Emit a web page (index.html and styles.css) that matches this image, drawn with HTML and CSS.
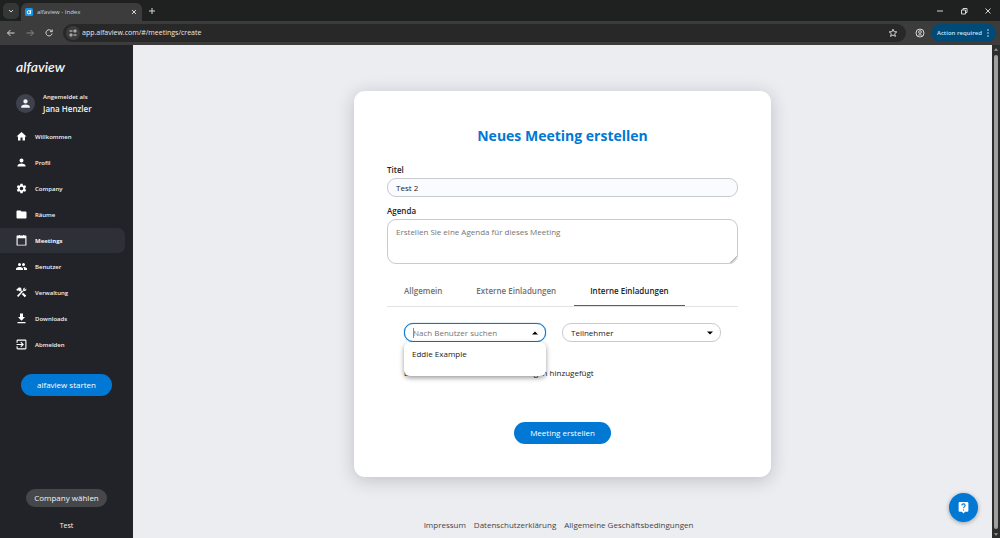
FILE: index.html
```html
<!DOCTYPE html>
<html lang="de">
<head>
    <meta charset="UTF-8">
    <meta name="viewport" content="width=device-width, initial-scale=1.0">
    <title>alfaview - Index</title>
    <link rel="stylesheet" href="styles.css">
</head>
<body>
    <!-- Browser window -->
    <div class="tab-strip">
        <button class="tab-search" aria-label="Search tabs">
            <svg class="icon-s" viewBox="0 0 8 8"><path class="line" d="M2 3l2 2 2-2"/></svg>
        </button>
        <div class="browser-tab">
            <svg class="favicon" viewBox="0 0 16 16"><rect width="16" height="16" rx="3" fill="#1694e8"/><ellipse cx="7.5" cy="8.5" rx="3" ry="3.4" fill="none" stroke="#fff" stroke-width="2"/><path d="M11.5 4l-1 8" stroke="#fff" stroke-width="2"/></svg>
            <span class="tab-title">alfaview - Index</span>
            <button class="plain" aria-label="Close tab">
                <svg class="icon-s" viewBox="0 0 8 8"><path class="line" d="M2 2l4 4M6 2l-4 4"/></svg>
            </button>
        </div>
        <button class="plain" aria-label="New tab">
            <svg class="icon-s" viewBox="0 0 8 8"><path class="line" d="M4 1v6M1 4h6"/></svg>
        </button>
        <div class="window-buttons">
            <button class="plain" aria-label="Minimize"><svg class="icon-s" viewBox="0 0 8 8"><path class="line" d="M1 4h6"/></svg></button>
            <button class="plain" aria-label="Restore"><svg class="icon-s" viewBox="0 0 8 8"><path class="line" d="M1.5 3h4v4h-4zM3 3V1.500h4v4H5.500"/></svg></button>
            <button class="plain" aria-label="Close"><svg class="icon-s" viewBox="0 0 8 8"><path class="line" d="M1.500 1.500l5 5M6.500 1.500l-5 5"/></svg></button>
        </div>
    </div>
    <div class="toolbar">
        <button class="plain" aria-label="Back"><svg class="icon-m" viewBox="0 0 10 10"><path class="line" d="M8.500 5h-7M4.500 2l-3 3 3 3"/></svg></button>
        <button class="plain dim" aria-label="Forward"><svg class="icon-m" viewBox="0 0 10 10"><path class="line" d="M1.500 5h7M5.500 2l3 3-3 3"/></svg></button>
        <button class="plain" aria-label="Reload"><svg class="icon-m" viewBox="0 0 10 10"><path class="line" d="M7.800 3.400A3.100 3.100 0 1 0 8.100 5.500M8.200 1.500v2.200H6"/></svg></button>
        <div class="address-bar">
            <button class="site-info" aria-label="Site information"><svg class="icon-m" viewBox="0 0 10 10"><path class="line" d="M1.500 3h3M5.500 7h3"/><circle class="line" cx="7" cy="3" r="1.100"/><circle class="line" cx="3" cy="7" r="1.100"/></svg></button>
            <input class="url" type="text" aria-label="Address" value="app.alfaview.com/#/meetings/create">
            <button class="plain" aria-label="Bookmark"><svg class="icon-m" viewBox="0 0 10 10"><path class="line" d="M5 1.200l1.100 2.500 2.700.2-2.100 1.800.7 2.700L5 7l-2.400 1.400.7-2.700-2.100-1.800 2.700-.2z"/></svg></button>
        </div>
        <button class="plain profile-button" aria-label="Profile"><svg class="icon-m" viewBox="0 0 10 10"><circle class="line" cx="5" cy="5" r="4"/><circle class="line" cx="5" cy="4" r="1.400"/><path class="line" d="M2.500 8c1-1.700 4-1.700 5 0"/></svg></button>
        <button class="action-required">Action required
            <svg class="icon-s" viewBox="0 0 8 8" fill="currentColor"><circle cx="4" cy="1" r=".8"/><circle cx="4" cy="4" r=".8"/><circle cx="4" cy="7" r=".8"/></svg>
        </button>
    </div>

    <div class="app">
        <aside class="sidebar">
            <div class="logo">alfaview</div>
            <div class="user">
                <div class="avatar">
                    <svg viewBox="0 0 24 24" fill="currentColor"><path d="M12 12a4 4 0 1 0 0-8 4 4 0 0 0 0 8zm0 2c-2.670 0-8 1.340-8 4v2h16v-2c0-2.660-5.330-4-8-4z"/></svg>
                </div>
                <div>
                    <p class="user-label">Angemeldet als</p>
                    <p class="user-name">Jana Henzler</p>
                </div>
            </div>

            <nav class="menu">
                <a href="#"><svg viewBox="1 1 22 22"><path d="M10 20v-6h4v6h5v-8h3L12 3 2 12h3v8z"/></svg>Willkommen</a>
                <a href="#"><svg viewBox="1 1 22 22"><path d="M12 12a4 4 0 1 0 0-8 4 4 0 0 0 0 8zm0 2c-2.670 0-8 1.340-8 4v2h16v-2c0-2.660-5.330-4-8-4z"/></svg>Profil</a>
                <a href="#"><svg viewBox="1 1 22 22"><path d="M19.140 12.940c.04-.3.060-.61.060-.94s-.02-.64-.07-.94l2.030-1.580c.18-.14.230-.41.120-.61l-1.920-3.320c-.12-.22-.37-.29-.59-.22l-2.390.96c-.5-.38-1.030-.7-1.620-.94l-.36-2.540A.484.484 0 0 0 13.920 2.400h-3.840c-.24 0-.43.17-.47.410l-.36 2.540c-.59.240-1.130.570-1.620.940l-2.390-.96c-.22-.08-.47 0-.59.220L2.740 8.870c-.12.210-.08.470.12.610l2.030 1.580c-.05.300-.09.630-.09.940s.02.640.07.940l-2.030 1.580c-.18.140-.23.410-.12.610l1.920 3.320c.12.220.37.290.59.220l2.390-.96c.5.380 1.030.7 1.620.94l.36 2.540c.05.240.24.410.48.410h3.840c.24 0 .44-.17.47-.41l.36-2.540c.59-.24 1.130-.56 1.620-.94l2.390.96c.22.080.47 0 .59-.22l1.920-3.320c.12-.22.070-.47-.12-.61zM12 15.600a3.600 3.600 0 1 1 0-7.200 3.600 3.600 0 0 1 0 7.200z"/></svg>Company</a>
                <a href="#"><svg viewBox="1 1 22 22"><path d="M10 4H4c-1.100 0-2 .9-2 2v12c0 1.100.9 2 2 2h16c1.100 0 2-.9 2-2V8c0-1.100-.9-2-2-2h-8z"/></svg>Räume</a>
                <a href="#" class="active"><svg viewBox="2 2 20 20"><path d="M20 3h-3V1h-2v2H9V1H7v2H4Q3 3 3 4v17h18V4q0-1-1-1zm-1 16.500H5V8h14z" fill-rule="evenodd"/></svg>Meetings</a>
                <a href="#"><svg viewBox="1 1 22 22"><path d="M16 11a3 3 0 1 0 0-6 3 3 0 0 0 0 6zm-8 0a3 3 0 1 0 0-6 3 3 0 0 0 0 6zm0 2c-2.330 0-7 1.170-7 3.500V19h14v-2.500C15 14.170 10.330 13 8 13zm8 0c-.29 0-.62.020-.97.050 1.160.84 1.970 1.970 1.970 3.450V19h6v-2.500c0-2.330-4.670-3.500-7-3.500z"/></svg>Benutzer</a>
                <a href="#"><svg viewBox="1 1 22 22"><path d="M3 18.500l8-8-2-2-1.500 1.500-1.500-1.500V6L4 9 1.500 6.500 6.500 2H10l2.500 3.500L11 7l2 2L15.500 7.500C14 4 17 1.500 20 2.500L17.500 5 19 6.500 21.500 4c1 3-1.500 6-5 4.500L5.500 21zM15.500 12.500l6 6-3 3-6-6z"/></svg>Verwaltung</a>
                <a href="#"><svg viewBox="1 1 22 22"><path d="M19 9h-4V2H9v7H5l7 7.500zM4 19v2.500h16V19z"/></svg>Downloads</a>
                <a href="#"><svg viewBox="2 2 20 20"><path d="M10 15.600l1.400 1.400 5-5-5-5L10 8.400l2.600 2.600H3v2h9.600zM19 3H5a2 2 0 0 0-2 2v4h2V5h14v14H5v-4H3v4c0 1.100.9 2 2 2h14c1.100 0 2-.9 2-2V5c0-1.100-.9-2-2-2z"/></svg>Abmelden</a>
            </nav>

            <button class="btn start-button">alfaview starten</button>
            <div class="company">
                <button class="company-button">Company wählen</button>
                <p>Test</p>
            </div>
        </aside>

        <main class="content">
            <form class="card">
                <h1>Neues Meeting erstellen</h1>

                <label for="title">Titel</label>
                <input class="field" type="text" id="title" name="title" value="Test 2">

                <label for="agenda">Agenda</label>
                <textarea class="field agenda" id="agenda" name="agenda" placeholder="Erstellen Sie eine Agenda für dieses Meeting"></textarea>

                <div class="tabs" role="tablist">
                    <button type="button" role="tab">Allgemein</button>
                    <button type="button" role="tab">Externe Einladungen</button>
                    <button type="button" role="tab" class="selected" aria-selected="true">Interne Einladungen</button>
                </div>

                <div class="tab-panel">
                    <div class="invite-row">
                        <div class="combo search">
                            <input class="field" type="text" id="user" aria-label="Benutzer" placeholder="Nach Benutzer suchen">
                            <svg class="arrow" viewBox="0 0 6 4"><path d="M0 3.500L3 .5l3 3z"/></svg>
                            <ul class="options">
                                <li>Eddie Example</li>
                            </ul>
                        </div>
                        <div class="combo role">
                            <select class="field" id="role" aria-label="Rolle">
                                <option>Teilnehmer</option>
                            </select>
                            <svg class="arrow" viewBox="0 0 6 4"><path d="M0 .5l3 3 3-3z"/></svg>
                        </div>
                    </div>
                    <p class="empty">Es wurden keine internen Einladungen hinzugefügt</p>
                </div>

                <button type="submit" class="btn submit-button">Meeting erstellen</button>
            </form>

            <footer>
                <a href="#">Impressum</a>
                <a href="#">Datenschutzerklärung</a>
                <a href="#">Allgemeine Geschäftsbedingungen</a>
            </footer>

            <button class="help-button" aria-label="Hilfe">
                <svg viewBox="0 0 24 24"><path fill="#fff" d="M5 2h14a2 2 0 0 1 2 2v14a2 2 0 0 1-2 2h-4l-3 3-3-3H5a2 2 0 0 1-2-2V4c0-1.100.9-2 2-2z"/><path fill="none" stroke="#0078d4" stroke-width="2" d="M9 8.500C9 4 15 4.500 15 8.300c0 2.500-3 2.700-3 5.200M12 15.500v2"/></svg>
            </button>
        </main>

        <div class="scrollbar">
            <svg viewBox="0 0 6 4"><path d="M0 4L3 0l3 4z"/></svg>
            <div class="thumb"></div>
            <svg viewBox="0 0 6 4"><path d="M0 0l3 4 3-4z"/></svg>
        </div>
    </div>
</body>
</html>
```
FILE: styles.css
```css
:root {
    --primary: #0078d4;
    --sidebar: #222328;
    --page: #ecedf1;
    --border: #c8cacd;
    --text: #222;
}

* {
    margin: 0;
    padding: 0;
    box-sizing: border-box;
}

body {
    display: flex;
    flex-direction: column;
    height: 100vh;
    overflow: hidden;
    font-family: 'Open Sans', 'Noto Sans', sans-serif;
    font-size: 8px;
    line-height: 12px;
    color: var(--text);
    background: var(--page);
}

button, input, textarea, select {
    font: inherit;
    color: inherit;
    border: none;
    background: none;
    outline: none;
}

a {
    color: inherit;
    text-decoration: none;
}

svg {
    display: block;
    flex: none;
}

.line {
    fill: none;
    stroke: currentColor;
    stroke-width: 1;
}

.icon-s {
    width: 8px;
    height: 8px;
}

.icon-m {
    width: 10px;
    height: 10px;
}

/* Browser window */
.tab-strip {
    display: flex;
    align-items: center;
    height: 21px;
    padding: 0 8px 0 3px;
    background: #1f2120;
    color: #d5d5d5;
    font-size: 6px;
}

.tab-search {
    padding: 4px;
    margin-right: 2px;
    border-radius: 5px;
    background: #353736;
}

.browser-tab {
    display: flex;
    align-items: center;
    gap: 4px;
    align-self: flex-end;
    width: 121px;
    height: 18px;
    padding: 0 4px;
    margin-right: 6px;
    border-radius: 6px 6px 0 0;
    background: #3c3c3c;
}

.favicon {
    width: 8px;
    height: 8px;
}

.tab-title {
    flex: 1;
}

.window-buttons {
    display: flex;
    gap: 16px;
    margin-left: auto;
}

.toolbar {
    display: flex;
    align-items: center;
    gap: 9px;
    height: 24px;
    padding: 0 4px 0 6px;
    background: #3c3c3c;
    color: #d5d5d5;
    font-size: 7px;
}

.dim {
    color: #858585;
}

.address-bar {
    display: flex;
    flex: 1;
    align-items: center;
    height: 18px;
    padding: 0 8px 0 3px;
    border-radius: 9px;
    background: #282828;
}

.site-info {
    padding: 2px;
    margin-right: 2px;
    border-radius: 50%;
    background: #3c3c3c;
}

.url {
    flex: 1;
    color: #e8e8e8;
}

.profile-button {
    margin-right: -3px;
}

.action-required {
    display: flex;
    align-items: center;
    gap: 2px;
    height: 18px;
    padding: 0 4px 0 6px;
    border-radius: 9px;
    background: #004a77;
    color: #c2e7ff;
    font-size: 6px;
    font-weight: 600;
}

/* Layout */
.app {
    display: flex;
    flex: 1;
    min-height: 0;
}

.sidebar {
    display: flex;
    flex-direction: column;
    flex: none;
    width: 133px;
    padding: 13px 0 6px;
    background: var(--sidebar);
    color: #f3f3f5;
    font-size: 7px;
}

.logo {
    padding-left: 16px;
    font-family: Lato, sans-serif;
    font-size: 14px;
    font-style: italic;
    font-weight: 600;
    line-height: 18px;
}

.user {
    display: flex;
    align-items: center;
    gap: 8px;
    padding: 15px 0 0 16px;
}

.avatar {
    padding: 3px;
    border-radius: 50%;
    background: #3e424c;
}

.avatar svg {
    width: 13px;
    height: 13px;
}

.user-label {
    font-size: 6px;
    font-weight: 600;
}

.user-name {
    font-size: 8px;
    font-weight: 600;
}

.menu {
    display: flex;
    flex-direction: column;
    gap: 1px;
    padding: 9px 8px 0 0;
    font-size: 6px;
    font-weight: 600;
}

.menu a {
    display: flex;
    align-items: center;
    gap: 8px;
    height: 25px;
    padding-left: 16px;
    border-radius: 0 7px 7px 0;
}

.menu a.active {
    background: #2e3038;
    font-weight: 700;
}

.menu svg {
    width: 11px;
    height: 11px;
    fill: #fff;
}

.btn {
    height: 22px;
    padding: 0 16px;
    border-radius: 11px;
    background: var(--primary);
    color: #fff;
    font-size: 8px;
    cursor: pointer;
}

.start-button {
    align-self: center;
    margin-top: 17px;
    font-weight: 500;
}

.company {
    margin-top: auto;
    text-align: center;
}

.company-button {
    height: 18px;
    padding: 0 8px;
    margin-bottom: 13px;
    border-radius: 9px;
    background: #46474b;
    font-size: 8px;
}

.content {
    position: relative;
    display: flex;
    flex-direction: column;
    align-items: center;
    flex: 1;
    padding: 46px 16px 7px;
}

/* Meeting form */
.card {
    display: flex;
    flex-direction: column;
    width: 100%;
    max-width: 417px;
    padding: 35px 33px 33px;
    border-radius: 11px;
    background: #fff;
    box-shadow: 0 3px 18px rgba(30, 30, 50, 0.22);
}

h1 {
    margin-bottom: 18px;
    color: var(--primary);
    font-size: 14px;
    font-weight: 700;
    line-height: 20px;
    text-align: center;
}

label {
    margin-bottom: 2px;
    font-weight: 600;
}

.field {
    width: 100%;
    height: 19px;
    padding: 0 8px;
    border: 1px solid var(--border);
    border-radius: 9px;
    background: #fff;
}

#title {
    margin-bottom: 8px;
    background: #fafbfe;
}

.field.agenda {
    height: 45px;
    padding-top: 6px;
    resize: vertical;
}

.agenda::-webkit-resizer {
    background: linear-gradient(135deg, transparent 75%, #bbb 75%, #bbb 80%, transparent 80%);
}

::placeholder {
    color: #757575;
    opacity: 1;
}

.tabs {
    display: flex;
    gap: 2px;
    padding-left: 1px;
    margin-top: 12px;
    border-bottom: 1px solid #e2e3e5;
}

.tabs button {
    height: 30px;
    padding: 0 16px;
    border-bottom: 1px solid transparent;
    color: #707070;
    font-weight: 600;
}

.tabs button.selected {
    border-color: var(--primary);
    color: var(--text);
}

.tab-panel {
    padding: 16px 17px 0;
}

.invite-row {
    display: flex;
    gap: 16px;
}

.combo {
    position: relative;
}

.combo.search {
    flex: 142;
}

.combo.role {
    flex: 159;
}

.search .field {
    border-color: var(--primary);
    box-shadow: 0 0 1px var(--primary);
}

/* text cursor */
.search::before {
    content: '';
    position: absolute;
    top: 5px;
    left: 9px;
    width: 1px;
    height: 10px;
    background: #6f8fae;
}

.combo select {
    display: block;
    appearance: none;
}

.arrow {
    position: absolute;
    top: 8px;
    right: 8px;
    width: 6px;
    height: 4px;
    pointer-events: none;
}

.options {
    position: absolute;
    top: 19px;
    left: 0;
    width: 100%;
    height: 34px;
    padding: 6px 8px;
    border-radius: 6px;
    background: #fff;
    box-shadow: 0 2px 5px rgba(0, 0, 0, 0.4);
    list-style: none;
}

.empty {
    margin-top: 25px;
}

.submit-button {
    align-self: center;
    margin-top: 43px;
}

footer {
    display: flex;
    gap: 8px;
    padding-right: 8px;
    margin-top: auto;
    color: #444;
}

.help-button {
    position: absolute;
    right: 14px;
    bottom: 16px;
    padding: 8px;
    border-radius: 50%;
    background: var(--primary);
    box-shadow: 0 1px 4px rgba(0, 0, 0, 0.35);
}

.help-button svg {
    width: 13px;
    height: 13px;
}

.scrollbar {
    display: flex;
    flex-direction: column;
    align-items: center;
    gap: 4px;
    width: 8px;
    padding: 3px 0 2px;
    background: #2c2c2c;
}

.scrollbar svg {
    width: 4px;
    height: 3px;
    fill: #9f9f9f;
}

.thumb {
    flex: 1;
    width: 4px;
    border-radius: 2px;
    background: #9f9f9f;
}
```
